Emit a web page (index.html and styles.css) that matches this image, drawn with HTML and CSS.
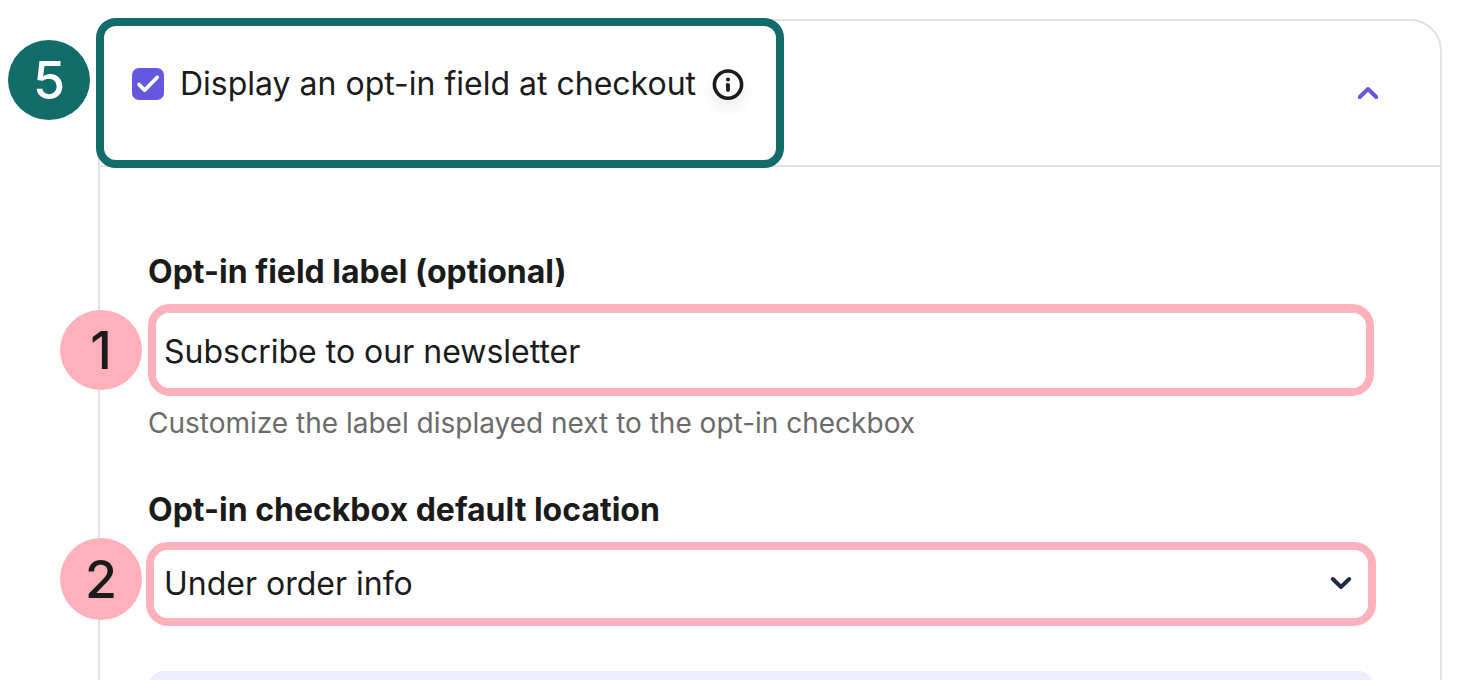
FILE: index.html
```html
<!DOCTYPE html>
<html lang="en">
<head>
<meta charset="utf-8">
<title>Opt-in settings</title>
<link rel="stylesheet" href="styles.css">
</head>
<body>
<main class="card">
  <header class="card-header">
    <div class="highlight">
      <span class="badge badge-green">5</span>
      <input class="check" type="checkbox" id="display-optin" checked>
      <label class="check-label" for="display-optin">Display an opt-in field at checkout</label>
      <button class="icon-button info" type="button" aria-label="More information">
        <svg width="32" height="32" viewBox="0 0 32 32" fill="none"><circle cx="16" cy="16.6" r="13.6" stroke="#1b1b1b" stroke-width="3.6"/><circle cx="16" cy="11.4" r="2" fill="#1b1b1b"/><path d="M15.6 17H16V22" stroke="#1b1b1b" stroke-width="3.8" stroke-linecap="round" stroke-linejoin="round"/></svg>
      </button>
    </div>
    <button class="icon-button" type="button" aria-label="Collapse section">
      <svg width="24" height="16" viewBox="0 0 24 16" fill="none"><path d="M3.8 12L12 4L20.2 12" stroke="#6558de" stroke-width="4" stroke-linecap="round" stroke-linejoin="round"/></svg>
    </button>
  </header>
  <section class="card-body">
    <div class="field">
      <label class="field-label" for="optin-label">Opt-in field label (optional)</label>
      <div class="control">
        <span class="badge badge-pink">1</span>
        <input class="text-input" id="optin-label" type="text" value="Subscribe to our newsletter">
      </div>
      <p class="help">Customize the label displayed next to the opt-in checkbox</p>
    </div>
    <div class="field">
      <label class="field-label" for="optin-location">Opt-in checkbox default location</label>
      <div class="control control-wide">
        <span class="badge badge-pink badge-low">2</span>
        <select class="select" id="optin-location"><option>Under order info</option></select>
        <svg class="chevron" width="24" height="16" viewBox="0 0 24 16" fill="none"><path d="M3.8 4L12 12L20.2 4" stroke="#1c2d3f" stroke-width="4" stroke-linecap="round" stroke-linejoin="round"/></svg>
      </div>
    </div>
    <div class="notice"></div>
  </section>
</main>
</body>
</html>
```
FILE: styles.css
```css
* { box-sizing: border-box; }
body {
  margin: 0;
  height: 100vh;
  overflow: hidden;
  padding: 19px 18px 0 98px;
  background: #fff;
  color: #1b1b1b;
  font-family: Inter, "Liberation Sans", sans-serif;
  font-size: 32px;
  line-height: 40px;
}
.card {
  border: 2px solid #e2e2e2;
  border-radius: 32px;
}
.card-header {
  display: flex;
  align-items: center;
  justify-content: space-between;
  border-bottom: 2px solid #e2e2e2;
  padding-right: 60px;
}
.highlight {
  position: relative;
  display: flex;
  align-items: center;
  margin: -3px 0 -3px -4px;
  padding: 38px 32px 56px 28px;
  border: 8px solid #126c6a;
  border-radius: 20px;
  background: #fff;
}
.badge {
  position: absolute;
  display: flex;
  align-items: center;
  justify-content: center;
  width: 82px;
  height: 80px;
  padding-top: 2px;
  border-radius: 50%;
  font-size: 52px;
  font-weight: 500;
  line-height: 56px;
}
.badge-green { left: -96px; top: 14px; background: #126c6a; color: #fff; }
.badge-pink { left: -96px; top: -2px; background: #ffb0bb; }
.badge-low { left: -94px; top: -12px; height: 82px; }
.check {
  appearance: none;
  position: relative;
  flex: none;
  width: 32px;
  height: 32px;
  margin: 0 16px 0 0;
  border-radius: 7px;
  background: #6558de;
}
.check:checked::after {
  content: "";
  position: absolute;
  inset: 0;
  background: #fff;
  clip-path: path("M5.7 17.8 A1.8 1.8 0 0 1 8.3 15.2 L12.6 19.6 L24 8 A1.8 1.8 0 0 1 26.6 10.6 L13.9 23.4 Q12.6 24.6 11.3 23.4 Z");
}
.icon-button {
  display: flex;
  padding: 0;
  border: 0;
  background: none;
}
.info {
  margin-left: 16px;
  border-radius: 50%;
  box-shadow: 0 8px 16px rgba(0, 0, 0, 0.08);
}
.card-body {
  display: flex;
  flex-direction: column;
  gap: 45px;
  padding: 85px 66px 32px 48px;
}
.field-label { display: block; margin-bottom: 12px; font-weight: 700; }
.control {
  position: relative;
  display: flex;
  border: 8px solid #ffb0bb;
  border-radius: 22px;
}
.control-wide { margin: 0 -2px; }
.text-input, .select {
  appearance: none;
  width: 100%;
  border: 0;
  border-radius: 14px;
  outline: 0;
  background: #fff;
  color: inherit;
  font: inherit;
}
.text-input {
  height: 76px;
  padding: 2px 8px 0;
  border-top: 1px solid #ccc;
}
.select { height: 68px; padding: 0 56px 0 10px; }
.chevron { position: absolute; right: 15px; top: 25px; pointer-events: none; }
.help {
  margin: 7px 0 2px;
  color: #6b6b6b;
  font-size: 28px;
}
.notice { height: 80px; border-radius: 16px; background: #eeedfb; }
```
